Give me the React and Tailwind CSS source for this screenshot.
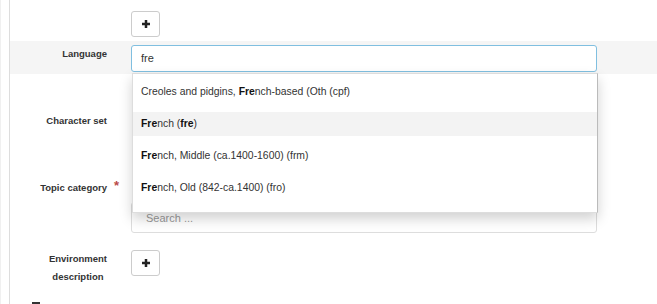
import React from "react";

const Plus = () => (
  <svg width="8" height="8" viewBox="0 0 8 8">
    <rect x="2.75" y="0" width="2.5" height="8" fill="#222" />
    <rect x="0" y="2.75" width="8" height="2.5" fill="#222" />
  </svg>
);

function PlusBtn() {
  return (
    <button className="w-[29px] h-[26px] border border-[#ccc] rounded-[3px] bg-white flex items-center justify-center">
      <Plus />
    </button>
  );
}

function Label({ children, className = "" }) {
  return (
    <div className={"w-[97px] shrink-0 text-right text-[9.5px] leading-[12px] font-bold text-[#333] " + className}>
      {children}
    </div>
  );
}

const items = [
  <>Creoles and pidgins, <b className="text-[#111]">Fre</b>nch-based (Oth (cpf)</>,
  <><b className="text-[#111]">Fre</b>nch (<b className="text-[#111]">fre</b>)</>,
  <><b className="text-[#111]">Fre</b>nch, Middle (ca.1400-1600) (frm)</>,
  <><b className="text-[#111]">Fre</b>nch, Old (842-ca.1400) (fro)</>,
];

export default function App() {
  return (
    <div
      className="relative w-[657px] h-[304px] overflow-hidden bg-white border-l border-[#f0f0f0]"
      style={{ fontFamily: '"Liberation Sans", Arial, sans-serif' }}
    >
      <div className="ml-[8px] h-full border-l border-[#ddd] flex flex-col">
        {/* Row: plus */}
        <div className="flex pt-[11px] pb-[4px]">
          <div className="w-[97px] shrink-0" />
          <div className="ml-[24px]">
            <PlusBtn />
          </div>
        </div>

        {/* Row: Language */}
        <div className="flex bg-[#f5f5f5] pt-[4px] pb-[2px]">
          <Label className="pt-[3px]">Language</Label>
          <div className="ml-[24px] w-[466px]">
            <div className="h-[27px] border border-[#80bfe0] rounded-[3px] bg-white flex items-center pl-[9px] text-[11px] text-[#333]">
              fre
            </div>
          </div>
        </div>

        {/* Row: Character set */}
        <div className="flex h-[86px]">
          <Label className="pt-[41px]">Character set</Label>
          <div className="ml-[24px] w-[466px]" />
        </div>

        {/* Row: Topic category */}
        <div className="flex h-[80px]">
          <Label className="pt-[23px]">
            <span className="relative">
              Topic category
              <span className="absolute -right-[12px] -top-[2px] text-[13px] text-[#b94a48] font-bold">*</span>
            </span>
          </Label>
          <div className="ml-[24px] w-[466px] pt-[43px]">
            <div className="h-[31px] border border-[#ddd] rounded-[3px] bg-white flex items-center pl-[14px] text-[11px] text-[#999]">
              Search ...
            </div>
          </div>
        </div>

        {/* Row: Environment description */}
        <div className="flex pt-[11px]">
          <div className="w-[97px] shrink-0 flex justify-end">
            <div className="inline-block text-center text-[9.5px] leading-[18px] font-bold text-[#333]">
              Environment
              <br />
              description
            </div>
          </div>
          <div className="ml-[24px]">
            <PlusBtn />
          </div>
        </div>

        <div className="ml-[22px] mt-[16px] w-[8px] h-[2px] bg-[#333]" />
      </div>

      {/* Dropdown overlay */}
      <div className="absolute left-[131px] top-[73px] w-[466px] h-[140px] bg-white border border-[#ddd] border-r-[#bbb] shadow-[0_6px_12px_rgba(0,0,0,0.18)] pt-[6px] flex flex-col gap-[8px]">
        {items.map((it, i) => (
          <div
            key={i}
            className={
              "h-[24px] flex items-center pl-[8px] text-[10.4px] text-[#333] " +
              (i === 1 ? "bg-[#f3f3f3]" : "")
            }
          >
            <span>{it}</span>
          </div>
        ))}
      </div>
    </div>
  );
}
